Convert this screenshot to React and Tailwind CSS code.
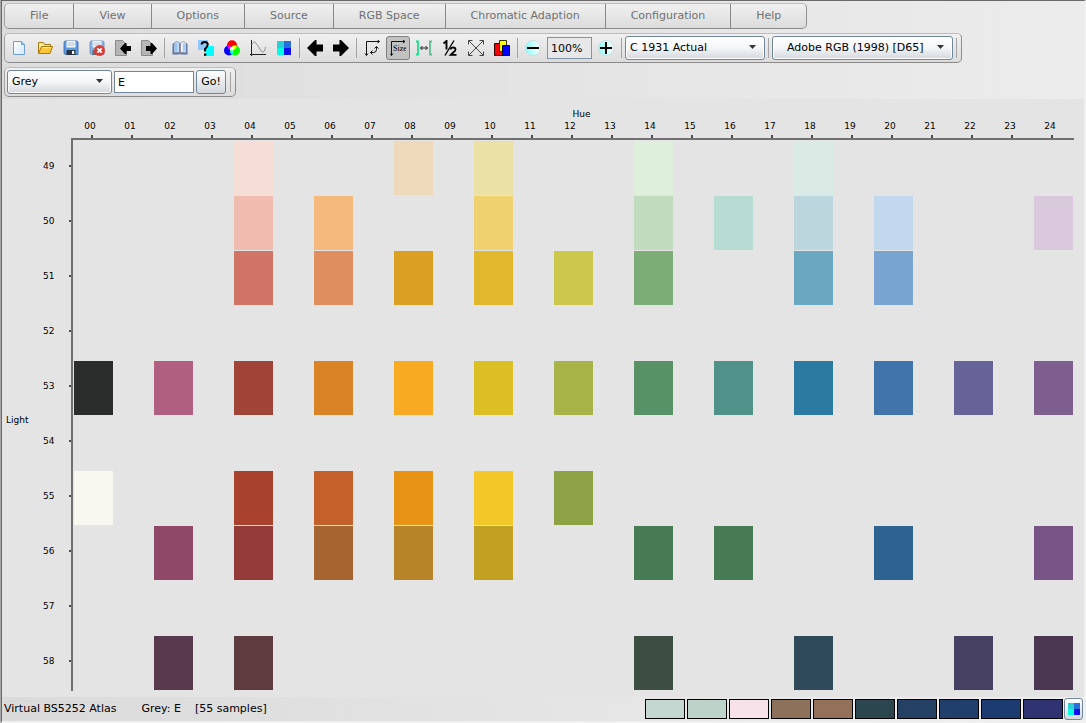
import React from "react";

const MENUS = ["File", "View", "Options", "Source", "RGB Space", "Chromatic Adaption", "Configuration", "Help"];

const HUES = Array.from({ length: 25 }, (_, i) => String(i).padStart(2, "0"));
const LIGHTS = [49, 50, 51, 52, 53, 54, 55, 56, 57, 58];

const SAMPLES = {
  49: { "04": "#f5ded6", "08": "#eedaba", 10: "#ebe1a6", 14: "#deefdb", 18: "#daeae4" },
  50: { "04": "#f0bcaf", "06": "#f5b97e", 10: "#efd26f", 14: "#c0dbbd", 16: "#b7dcd3", 18: "#bbd7dd", 20: "#c1d8ef", 24: "#dac9dc" },
  51: { "04": "#d07566", "06": "#df8f5d", "08": "#dba021", 10: "#e0b72d", 12: "#cbc84b", 14: "#7cad76", 18: "#6aa8c1", 20: "#78a4d1" },
  53: {
    "00": "#2b2d2c", "02": "#b15f80", "04": "#a04437", "06": "#da8326", "08": "#f8ab22", 10: "#dcbf22", 12: "#a8b447",
    14: "#569265", 16: "#50928a", 18: "#2b7aa1", 20: "#4074aa", 22: "#666399", 24: "#7e5e8f",
  },
  55: { "00": "#f8f8f0", "04": "#a9422d", "06": "#c5602b", "08": "#e79416", 10: "#f3c727", 12: "#8ca245" },
  56: {
    "02": "#8f4867", "04": "#943b39", "06": "#a66430", "08": "#b78427", 10: "#c2a022", 14: "#477b53", 16: "#477b53",
    20: "#2e6290", 24: "#785385",
  },
  58: { "02": "#59394e", "04": "#5e3b3e", 14: "#3c4d41", 18: "#2f4b59", 22: "#464163", 24: "#4b3751" },
};

const PALETTE = ["#c4d8d1", "#bdd2c9", "#f7e2e9", "#8d715b", "#957059", "#2c4650", "#244163", "#203f6b", "#1c3c71", "#303371"];

function Icon({ children }) {
  return (
    <svg width="16" height="16" viewBox="0 0 16 16" aria-hidden="true">
      {children}
    </svg>
  );
}

function ArrowLeft() {
  return (
    <Icon>
      <path d="M0 8 8 0h1.500v4.500H16v7H9.500V16H8z" fill="#000" />
    </Icon>
  );
}

function ArrowRight() {
  return (
    <Icon>
      <path d="M16 8 8 0H6.500v4.500H0v7h6.500V16H8z" fill="#000" />
    </Icon>
  );
}

function NewFile() {
  return (
    <Icon>
      <defs>
        <linearGradient id="page" x1="0" y1="0" x2="1" y2="1">
          <stop offset="0" stopColor="#fff" />
          <stop offset="1" stopColor="#d3e6fb" />
        </linearGradient>
      </defs>
      <path d="M2.500 1.500h8l3 3v10h-11z" fill="url(#page)" stroke="#6f9fd8" />
      <path d="M10.500 1.500v3h3" fill="#a9cbf2" stroke="#6f9fd8" />
    </Icon>
  );
}

function OpenFolder() {
  return (
    <Icon>
      <path d="M1.500 13.500v-11h5l1 2h6v3" fill="#ffe79b" stroke="#a8780c" />
      <path d="M1.500 13.500 4.500 6.500h11l-2.500 7z" fill="#fbc53a" stroke="#a8780c" strokeLinejoin="round" />
      <path d="M5.200 7.600h8.800" stroke="#fff0a8" />
    </Icon>
  );
}

function Disk() {
  return (
    <>
      <path d="M1 2.500Q1 1 2.500 1h11Q15 1 15 2.500v12H2.500L1 13.500z" fill="#5b9be0" stroke="#2e66a8" strokeWidth=".8" />
      <path d="M3.500 1h9v6.500h-9z" fill="#f4f7fb" />
      <path d="M4.500 3h7M4.500 5h7" stroke="#9fb2c8" strokeWidth=".8" />
      <path d="M3.500 10h9v5h-9z" fill="#2a3440" />
      <path d="M9 11h2.200v3H9z" fill="#fff" />
    </>
  );
}

function Save() {
  return <Icon><Disk /></Icon>;
}

function SaveCancel() {
  return (
    <Icon>
      <g opacity=".7"><Disk /></g>
      <circle cx="10.500" cy="10.500" r="5.200" fill="#dd3a36" stroke="#c44" strokeWidth=".6" />
      <path d="m8.300 8.300 4.400 4.400m0-4.400-4.400 4.400" stroke="#fff" strokeWidth="1.800" />
    </Icon>
  );
}

function PageBack() {
  return (
    <Icon>
      <path d="M.500.500h7l4 4v11H.500z" fill="#b5b5b5" stroke="#8a8a8a" />
      <path d="m5 8.500 5-5.500h1.500v3H16v5h-4.500v3H10z" fill="#000" />
    </Icon>
  );
}

function PageForward() {
  return (
    <Icon>
      <path d="M.500.500h7l4 4v11H.500z" fill="#b5b5b5" stroke="#8a8a8a" />
      <path d="m16 8.500-5-5.500H9.500v3H5v5h4.500v3H11z" fill="#000" />
    </Icon>
  );
}

function Book() {
  return (
    <Icon>
      <path d="M.500 4 2 3v9.500h12V3l1.500 1v10.500H9l-1-.8-1 .8H.500z" fill="#5d74a6" />
      <path d="M2 3q3.500-3 6 .5V13q-3-1.800-6-.3z" fill="#b9dcf8" stroke="#7c88ac" strokeWidth=".7" />
      <path d="M14 3q-3.500-3-6 .5V13q3-1.800 6-.3z" fill="#e6f2fc" stroke="#7c88ac" strokeWidth=".7" />
      <path d="M4 3.500v7.500M12 3.500v7.500" stroke="#8cb9e8" strokeWidth="1.400" />
      <path d="M8 3v10.500" stroke="#8b6a72" strokeWidth="1.300" />
    </Icon>
  );
}

function HelpPointer() {
  return (
    <Icon>
      <path d="M0 0h10v10H0z" fill="#90c8ff" />
      <path d="M8 6h8v10H8z" fill="#0ff" />
      <path d="M3.500 4.500Q4 2 6.500 2q3.300 0 3.300 2.600Q9.800 6.500 7 9v2.500" fill="none" stroke="#000" strokeWidth="1.900" />
      <path d="M6 13.500h2.300v2.300H6z" fill="#000" />
    </Icon>
  );
}

function ColourWheel() {
  return (
    <Icon>
      <circle cx="8" cy="5.200" r="5" fill="#f00" />
      <circle cx="5" cy="10.500" r="5" fill="#00f" />
      <circle cx="11" cy="10.500" r="5" fill="#0f0" />
      <path d="M3.300 5.900A5 5 0 0 1 8 6.500 5 5 0 0 0 6 10 5 5 0 0 1 3.300 5.900z" fill="#f0f" />
      <path d="M12.700 5.900A5 5 0 0 0 8 6.500a5 5 0 0 1 2 3.500 5 5 0 0 0 2.700-4.100z" fill="#ff0" />
      <path d="M8 14.500a5 5 0 0 1-2-4q2 .8 4 0a5 5 0 0 1-2 4z" fill="#0ff" />
      <circle cx="8" cy="8.700" r="2" fill="#fff" />
    </Icon>
  );
}

function Curve() {
  return (
    <Icon>
      <path d="M1.500 0v16M0 14.500h16" stroke="#222" fill="none" />
      <path d="M1.500 5 4.500 1.500 8 6l3.500 5.500q1.500 1.500 3-.5l1-4" stroke="#888" strokeWidth=".9" fill="none" />
    </Icon>
  );
}

function Quad({ size = 14 }) {
  return (
    <svg width={size} height={size} viewBox="0 0 14 14" aria-hidden="true" shapeRendering="crispEdges">
      <path d="M0 0h7v7H0z" fill="#2ad0d3" />
      <path d="M7 0h7v7H7z" fill="#246fdc" />
      <path d="M0 7h7v7H0z" fill="#00ffe0" />
      <path d="M7 7h7v7H7z" fill="#1210ee" />
    </svg>
  );
}

function SwapAxes() {
  return (
    <Icon>
      <path d="M2.500 15.500v-14H15.500M13.500 0l2 1.500-2 1.500M1 13.500l1.500 2 1.500-2" fill="none" stroke="#111" />
      <path d="M6.500 12.500h3q3 0 3-3V7M8.500 10.500l-2 2 2 2M10.500 8.500l2-2 2 2" fill="none" stroke="#111" />
    </Icon>
  );
}

function SizeAxes() {
  return (
    <Icon>
      <path d="M1.500 15.500v-14H15M13 0l2 1.500L13 3M0 13.500l1.500 2 1.500-2" fill="none" stroke="#111" />
      <text x="3" y="11" fontSize="8" fontFamily="Liberation Serif, serif" fill="#000">Size</text>
    </Icon>
  );
}

function Spacing() {
  return (
    <Icon>
      <path d="M0 1.500h2v13H0" fill="none" stroke="#19e08b" strokeWidth="1.800" />
      <path d="M16 1.500h-2v13H16" fill="none" stroke="#5bbf8d" strokeWidth="1.800" />
      <path d="M4.500 8h7M6.500 6l-2 2 2 2M9.500 6l2 2-2 2" fill="none" stroke="#111" strokeWidth=".9" />
    </Icon>
  );
}

function Half() {
  return (
    <Icon>
      <path d="M12 .500 3 15.500" stroke="#000" strokeWidth="1.400" />
      <path d="M1.500 3.500 4.500 1v8.500" fill="none" stroke="#000" strokeWidth="1.900" />
      <path d="M8.500 9.500Q9 7.500 11 7.500q2.500 0 2.500 2 0 1.200-2 2.800L8.800 14.800H14.500" fill="none" stroke="#000" strokeWidth="1.800" />
    </Icon>
  );
}

function Expand() {
  return (
    <Icon>
      <path d="m1 1 14 14M15 1 1 15M.500 4.500v-4h4M11.500.500h4v4M.500 11.500v4h4M11.500 15.500h4v-4" fill="none" stroke="#333" strokeWidth=".9" />
    </Icon>
  );
}

function Cards() {
  return (
    <Icon>
      <path d="M.500 3.500h8v12h-8z" fill="#f00" stroke="#300" />
      <path d="M5.500.500h7v11h-7z" fill="#ff0" stroke="#330" />
      <path d="M8.500 5.500h7v10h-7z" fill="#00f" stroke="#003" />
    </Icon>
  );
}

function Zoom({ plus }) {
  return (
    <Icon>
      <defs>
        <linearGradient id="lens">
          <stop offset="0" stopColor="#8ff" />
          <stop offset="1" stopColor="#fff" />
        </linearGradient>
      </defs>
      <circle cx="8" cy="8" r="7.500" fill="url(#lens)" stroke="#bcd3d3" strokeWidth=".6" />
      <path d={plus ? "M2 8h12M8 2v12" : "M2 8h12"} stroke="#000" strokeWidth="2" />
    </Icon>
  );
}

function Tool({ label, pressed, children }) {
  return (
    <button
      type="button"
      aria-label={label}
      aria-pressed={pressed}
      className={
        "mx-px flex h-6 w-6 shrink-0 items-center justify-center rounded-[3px] " +
        (pressed ? "border border-[#808080] bg-[#c2c2c2]" : "")
      }
    >
      {children}
    </button>
  );
}

function Separator({ wide }) {
  return <span className={"h-5 w-px shrink-0 bg-[#a3a3a3] " + (wide ? "mx-[3px]" : "mx-[2px]")} />;
}

function Select({ label, value, className, children }) {
  return (
    <span className={"relative flex h-6 shrink-0 " + className}>
      <select
        aria-label={label}
        defaultValue={value}
        className="w-full appearance-none rounded-[3px] border border-[#71869b] bg-linear-to-b from-white via-[#f4f6f8] to-[#d3d8dd] text-[11px] text-black shadow-[inset_0_0_0_1px_#ffffff]"
      >
        {children}
      </select>
      <svg width="7" height="4" viewBox="0 0 7 4" className="pointer-events-none absolute right-[9px] top-[9px]" aria-hidden="true">
        <path d="M0 0h7L3.500 4z" fill="#333" />
      </svg>
    </span>
  );
}

const bar = "flex w-fit items-center rounded-[5px] border border-t-[#bdbdbd] border-r-[#8f8f8f] border-b-[#8a8a8a] border-l-[#a3a3a3] bg-linear-to-b from-[#f0f0f0] to-[#dcdcdc]";

export default function App() {
  return (
    <div className="flex min-h-screen border-l border-l-[#a8a8a8] bg-[#e4e4e4] font-['DejaVu_Sans',Verdana,sans-serif] text-[11px] text-black">
      <div className="flex min-w-0 flex-1 flex-col border-t border-r-2 border-b-2 border-l border-t-[#6b686b] border-r-[#f0f0f0] border-b-[#f0f0f0] border-l-[#6b686b]">
        <header className="flex flex-col gap-1 bg-linear-to-r from-[#dcdcdc] to-[#ececec] px-[2px] pt-[2px] pb-[2px]">
          <nav className={bar + " h-[26px] items-stretch overflow-hidden"}>
            {MENUS.map((m, i) => (
              <button
                key={m}
                type="button"
                className={"px-[25px] text-[#707070] " + (i < MENUS.length - 1 ? "border-r border-[#888888]" : "")}
              >
                {m}
              </button>
            ))}
          </nav>

          <div role="toolbar" aria-label="Main" className={bar + " h-[30px] px-px"}>
            <Tool label="New"><NewFile /></Tool>
            <Tool label="Open"><OpenFolder /></Tool>
            <Tool label="Save"><Save /></Tool>
            <Tool label="Close"><SaveCancel /></Tool>
            <Tool label="Import"><PageBack /></Tool>
            <Tool label="Export"><PageForward /></Tool>
            <Separator />
            <Tool label="Atlas"><Book /></Tool>
            <Tool label="Help"><HelpPointer /></Tool>
            <Tool label="Colour mixing"><ColourWheel /></Tool>
            <Tool label="Spectrum"><Curve /></Tool>
            <Tool label="Palette"><Quad /></Tool>
            <Separator />
            <Tool label="Previous"><ArrowLeft /></Tool>
            <Tool label="Next"><ArrowRight /></Tool>
            <Separator />
            <Tool label="Swap axes"><SwapAxes /></Tool>
            <Tool label="Size" pressed><SizeAxes /></Tool>
            <Tool label="Spacing"><Spacing /></Tool>
            <Tool label="Half size"><Half /></Tool>
            <Tool label="Fit"><Expand /></Tool>
            <Tool label="Arrange"><Cards /></Tool>
            <Separator />
            <Tool label="Zoom out"><Zoom /></Tool>
            <input
              aria-label="Zoom"
              defaultValue="100%"
              className="mx-px h-[22px] w-[45px] border border-[#8193a6] bg-[#e8e8ea] px-[3px] text-[11px]"
            />
            <Tool label="Zoom in"><Zoom plus /></Tool>
            <Separator />
            <Select label="Observer" value="C 1931 Actual" className="ml-px w-[140px] [&>select]:pl-1">
              <option>C 1931 Actual</option>
            </Select>
            <Separator wide />
            <Select label="RGB space" value="Adobe RGB (1998) [D65]" className="w-[181px] [&>select]:pl-[14px]">
              <option>Adobe RGB (1998) [D65]</option>
            </Select>
            <Separator wide />
          </div>

          <form className={bar + " h-[30px] gap-[2px] px-[2px]"} onSubmit={(e) => e.preventDefault()}>
            <Select label="Group by" value="Grey" className="w-[105px] [&>select]:pl-1">
              <option>Grey</option>
            </Select>
            <input
              aria-label="Value"
              defaultValue="E"
              className="h-[22px] w-20 border border-[#71869b] bg-white px-[3px] text-[11px]"
            />
            <button
              type="submit"
              className="h-6 w-[30px] rounded-[3px] border border-[#71869b] bg-linear-to-b from-white to-[#d3d8dd]"
            >
              Go!
            </button>
            <Separator />
          </form>
        </header>

        <main className="grid flex-1 grid-cols-[40px_29px_minmax(0,1fr)] grid-rows-[auto_1fr] pr-[10px] pt-[9px] text-[9px] leading-3">
          <div className="col-start-3">
            <div className="pl-[50%]">Hue</div>
            <div className="flex pl-px pr-[2px]">
              {HUES.map((h) => (
                <div key={h} className="flex flex-1 flex-col items-center">
                  <span className="pr-1">{h}</span>
                  <span className="mt-[3px] h-[3px] w-[2px] bg-[#4d4d4d]" />
                </div>
              ))}
            </div>
          </div>
          <div className="col-start-1 self-center pt-1 pl-1">Light</div>
          <div>
            {LIGHTS.map((l) => (
              <div key={l} className="flex h-[55px] items-center justify-between pl-px">
                <span>{l}</span>
                <span className="h-[2px] w-[2px] bg-[#4d4d4d]" />
              </div>
            ))}
          </div>
          <div className="self-start border-t-2 border-l-2 border-[#707070] pt-px pl-px">
            {LIGHTS.map((l) => (
              <div key={l} className="flex h-[55px]">
                {HUES.map((h) => {
                  const color = SAMPLES[l]?.[h];
                  return (
                    <div key={h} className="flex-1 pr-px pb-px">
                      {color && <div className="h-full" title={`${h} E ${l}`} style={{ backgroundColor: color }} />}
                    </div>
                  );
                })}
              </div>
            ))}
          </div>
        </main>

        <footer className="flex h-6 items-center bg-linear-to-r from-[#dadada] to-[#efefef] pr-px pl-[2px]">
          <span>Virtual BS5252 Atlas</span>
          <span className="ml-[25px]">Grey: E</span>
          <span className="ml-[14px]">[55 samples]</span>
          <div className="ml-auto flex items-center gap-[2px]">
            {PALETTE.map((c) => (
              <div key={c} className="h-5 w-10 border border-black" style={{ backgroundColor: c }} />
            ))}
          </div>
          <button
            type="button"
            aria-label="Palette"
            className="ml-px flex h-[22px] w-[19px] items-center justify-center rounded-[3px] border border-[#71869b] bg-linear-to-b from-white to-[#d3d8dd]"
          >
            <Quad size={12} />
          </button>
        </footer>
      </div>
    </div>
  );
}
